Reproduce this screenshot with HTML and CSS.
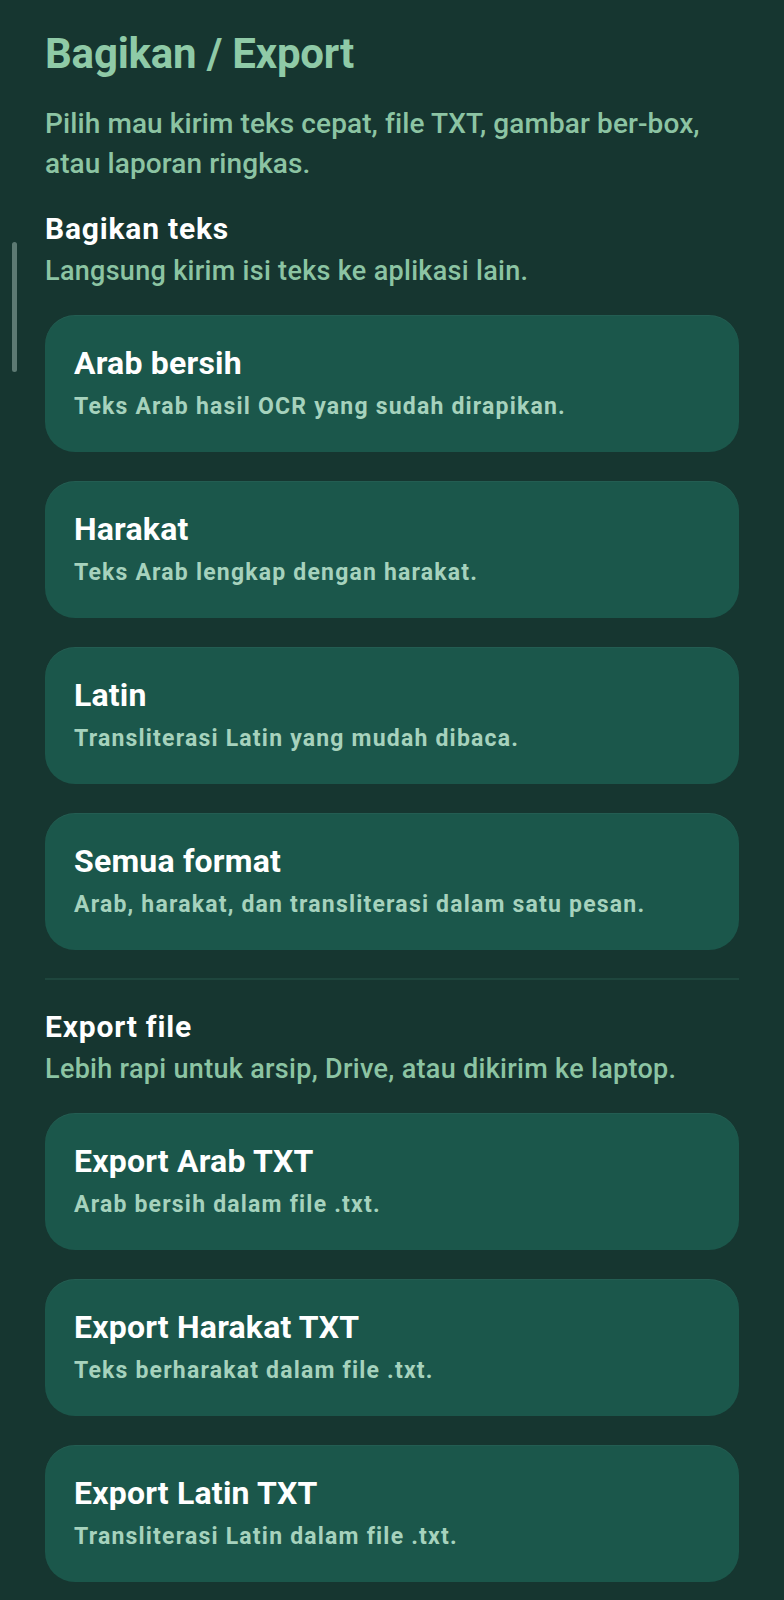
FILE: index.html
```html
<!DOCTYPE html>
<html lang="id">
<head>
<meta charset="utf-8">
<title>Bagikan / Export</title>
<link rel="stylesheet" href="styles.css">
</head>
<body>
<div class="scrollbar"></div>
<main class="sheet">
  <h1 class="title">Bagikan / Export</h1>
  <p class="intro">Pilih mau kirim teks cepat, file TXT, gambar ber-box, atau laporan ringkas.</p>

  <section class="group">
    <h2 class="group-title">Bagikan teks</h2>
    <p class="group-sub">Langsung kirim isi teks ke aplikasi lain.</p>
    <div class="cards">
      <div class="card"><div class="card-title">Arab bersih</div><div class="card-desc">Teks Arab hasil OCR yang sudah dirapikan.</div></div>
      <div class="card"><div class="card-title">Harakat</div><div class="card-desc">Teks Arab lengkap dengan harakat.</div></div>
      <div class="card"><div class="card-title">Latin</div><div class="card-desc">Transliterasi Latin yang mudah dibaca.</div></div>
      <div class="card"><div class="card-title">Semua format</div><div class="card-desc">Arab, harakat, dan transliterasi dalam satu pesan.</div></div>
    </div>
  </section>

  <hr class="divider">

  <section class="group group-export">
    <h2 class="group-title">Export file</h2>
    <p class="group-sub">Lebih rapi untuk arsip, Drive, atau dikirim ke laptop.</p>
    <div class="cards">
      <div class="card"><div class="card-title">Export Arab TXT</div><div class="card-desc">Arab bersih dalam file .txt.</div></div>
      <div class="card"><div class="card-title">Export Harakat TXT</div><div class="card-desc">Teks berharakat dalam file .txt.</div></div>
      <div class="card"><div class="card-title">Export Latin TXT</div><div class="card-desc">Transliterasi Latin dalam file .txt.</div></div>
    </div>
  </section>
</main>
</body>
</html>
```
FILE: styles.css
```css
html, body {
  margin: 0;
  padding: 0;
}
body {
  background: #163630;
  font-family: Roboto, "Noto Sans", "Liberation Sans", sans-serif;
  min-height: 1600px;
  position: relative;
}
.scrollbar {
  position: absolute;
  left: 12px;
  top: 242px;
  width: 5px;
  height: 130px;
  border-radius: 3px;
  background: #5d7a73;
}
.sheet {
  padding: 30px 45px 0 45px;
}
.title {
  margin: 0;
  font-size: 42px;
  line-height: 48px;
  font-weight: 700;
  color: #8fcaa7;
  letter-spacing: -0.2px;
}
.intro {
  margin: 26px 0 0 0;
  font-size: 28px;
  line-height: 40px;
  font-weight: 500;
  color: #8cc4a3;
  letter-spacing: 0.1px;
}
.group {
  margin-top: 28px;
}
.group-title {
  margin: 0;
  font-size: 30px;
  line-height: 34px;
  font-weight: 700;
  color: #ffffff;
  letter-spacing: 0.8px;
}
.group-sub {
  margin: 9px 0 0 0;
  font-size: 27px;
  line-height: 32px;
  font-weight: 500;
  color: #8cc4a3;
  letter-spacing: 0.3px;
}
.cards {
  margin-top: 28px;
  display: flex;
  flex-direction: column;
  gap: 29px;
}
.card {
  background: #1b574b;
  border-radius: 30px;
  padding: 31px 30px 31px 29px;
  box-shadow: inset 0 1px 0 rgba(255,255,255,0.04);
}
.card-title {
  font-size: 32px;
  line-height: 34px;
  font-weight: 700;
  color: #ffffff;
  letter-spacing: 0.2px;
}
.card-desc {
  margin-top: 13px;
  font-size: 23px;
  line-height: 28px;
  font-weight: 700;
  letter-spacing: 1.2px;
  color: #a6d2bd;
}
.divider {
  margin: 28px 0 0 0;
  border: 0;
  height: 2px;
  background: #1e463d;
}
.group-export {
  margin-top: 30px;
}
```
